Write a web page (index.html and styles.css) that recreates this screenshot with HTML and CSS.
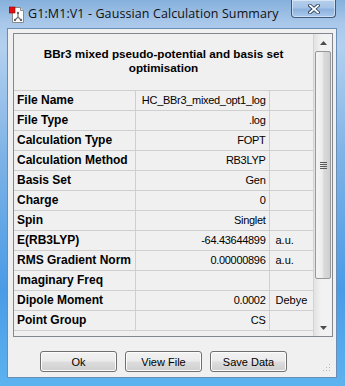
FILE: index.html
```html
<!DOCTYPE html>
<html lang="en">
<head>
    <meta charset="UTF-8">
    <meta name="viewport" content="width=device-width, initial-scale=1.0">
    <title>Gaussian Calculation Summary</title>
    <link rel="stylesheet" href="styles.css">
</head>
<body>
    <div class="window">
        <div class="titlebar">
            <svg class="appicon" width="16" height="18" viewBox="0 0 16 18">
                <path d="M3.5 1.5h8l3 3v12h-11z" fill="#fff" stroke="#8a8a8a"/>
                <path d="M11.5 1.5v3h3" fill="#e8e8e8" stroke="#8a8a8a"/>
                <rect x="0" y="1" width="6" height="6" fill="#e01010" stroke="#900" stroke-width="0.6"/>
                <path d="M9 7v4M9 11l-3 3M9 11l3 3" stroke="#777" stroke-width="1.2" fill="none"/>
                <circle cx="9" cy="7" r="1.2" fill="#666"/>
                <circle cx="6" cy="14" r="1.2" fill="#666"/>
                <circle cx="12" cy="14" r="1.2" fill="#666"/>
            </svg>
            <span class="title">G1:M1:V1 - Gaussian Calculation Summary</span>
            <div class="close">
                <svg width="12" height="10" viewBox="0 0 12 10">
                    <path d="M2 1.5l8 7M10 1.5l-8 7" stroke="#2b3f5c" stroke-width="3.6" stroke-linecap="square"/>
                    <path d="M2 1.5l8 7M10 1.5l-8 7" stroke="#fff" stroke-width="1.8" stroke-linecap="square"/>
                </svg>
            </div>
        </div>
        <div class="client">
            <div class="panel">
                <div class="grid">
                    <table class="summary">
                        <colgroup>
                            <col class="c-label">
                            <col class="c-val">
                            <col class="c-unit">
                        </colgroup>
                        <tr class="head">
                            <td colspan="3">BBr3 mixed pseudo-potential and basis set<br>optimisation</td>
                        </tr>
                        <tr><th>File Name</th><td class="val">HC_BBr3_mixed_opt1_log</td><td class="unit"></td></tr>
                        <tr><th>File Type</th><td class="val">.log</td><td class="unit"></td></tr>
                        <tr><th>Calculation Type</th><td class="val">FOPT</td><td class="unit"></td></tr>
                        <tr><th>Calculation Method</th><td class="val">RB3LYP</td><td class="unit"></td></tr>
                        <tr><th>Basis Set</th><td class="val">Gen</td><td class="unit"></td></tr>
                        <tr><th>Charge</th><td class="val">0</td><td class="unit"></td></tr>
                        <tr><th>Spin</th><td class="val">Singlet</td><td class="unit"></td></tr>
                        <tr><th>E(RB3LYP)</th><td class="val">-64.43644899</td><td class="unit">a.u.</td></tr>
                        <tr><th>RMS Gradient Norm</th><td class="val">0.00000896</td><td class="unit">a.u.</td></tr>
                        <tr><th>Imaginary Freq</th><td class="val"></td><td class="unit"></td></tr>
                        <tr><th>Dipole Moment</th><td class="val">0.0002</td><td class="unit">Debye</td></tr>
                        <tr><th>Point Group</th><td class="val">CS</td><td class="unit"></td></tr>
                    </table>
                </div>
                <div class="scrollbar">
                    <div class="arrow"><svg width="7" height="4" viewBox="0 0 7 4"><path d="M0 4L3.5 0L7 4z" fill="#4d4d4d"/></svg></div>
                    <div class="track">
                        <div class="thumb">
                            <span class="grip-line"></span>
                            <span class="grip-line"></span>
                            <span class="grip-line"></span>
                            <span class="grip-line"></span>
                        </div>
                    </div>
                    <div class="arrow"><svg width="7" height="4" viewBox="0 0 7 4"><path d="M0 0L3.5 4L7 0z" fill="#4d4d4d"/></svg></div>
                </div>
            </div>
            <div class="buttons">
                <button>Ok</button>
                <button>View File</button>
                <button>Save Data</button>
            </div>
            <svg class="sizegrip" width="8" height="8" viewBox="0 0 8 8">
                <rect x="6" y="0" width="1" height="1" fill="#b8b8b8"/>
                <rect x="3" y="3" width="1" height="1" fill="#b8b8b8"/>
                <rect x="6" y="3" width="1" height="1" fill="#b8b8b8"/>
                <rect x="0" y="6" width="1" height="1" fill="#b8b8b8"/>
                <rect x="3" y="6" width="1" height="1" fill="#b8b8b8"/>
                <rect x="6" y="6" width="1" height="1" fill="#b8b8b8"/>
            </svg>
        </div>
    </div>
</body>
</html>
```

FILE: styles.css
```css
*{margin: 0px;padding: 0px;box-sizing: border-box;}
body{
    width: 345px;
    height: 386px;
    overflow: hidden;
    font-family: "Liberation Sans", Arial, sans-serif;
}
.window{
    width: 345px;
    height: 386px;
    padding: 0px 8px 8px 7px;
    display: flex;
    flex-direction: column;
    background: linear-gradient(180deg, #86b0dc 0%, #a9c8ea 6%, #b3d0ef 12%, #7fb3e6 40%, #4a9be6 75%, #5cb3ef 100%);
}
.titlebar{
    height: 28px;
    display: flex;
    align-items: flex-start;
    flex-shrink: 0;
}
.appicon{
    margin: 6px 0px 0px 2px;
}
.title{
    margin: 5px 0px 0px 3px;
    font-family: "Open Sans", "Noto Sans", sans-serif;
    font-size: 12.5px;
    letter-spacing: 0.1px;
    color: #111;
    flex: 1;
    white-space: nowrap;
}
.close{
    width: 45px;
    height: 18px;
    margin-right: 1px;
    border: 1px solid #3e5a7e;
    border-top: none;
    border-radius: 0px 0px 4px 4px;
    background: linear-gradient(180deg, #b5cfec 0%, #a6c3e6 45%, #8db2de 55%, #a9c9ec 100%);
    box-shadow: inset 0px 0px 0px 1px rgba(255,255,255,0.45);
    display: flex;
    align-items: center;
    justify-content: center;
}
.client{
    flex: 1;
    position: relative;
    background: #f0f0f0;
    border: 1px solid #6a8db6;
    padding: 4px 3px 0px 5px;
}
.panel{
    height: 304px;
    border: 1px solid #828790;
    display: flex;
    background: #f0f0f0;
}
.grid{
    width: 299px;
    overflow: hidden;
}
.summary{
    width: 299px;
    border-collapse: collapse;
    table-layout: fixed;
}
.c-label{width: 121px;}
.c-val{width: 134px;}
.c-unit{width: 44px;}
.summary th, .summary td{
    height: 20px;
    border: 1px solid #cfcfcf;
    font-size: 11px;
    white-space: nowrap;
    overflow: hidden;
}
.summary tr:first-child td{
    border-top: none;
}
.summary th{
    border-left: none;
    text-align: left;
    font-size: 12px;
    font-weight: bold;
    padding: 0px 0px 0px 3px;
    color: #000;
}
.summary .val{
    text-align: right;
    padding-right: 3px;
    letter-spacing: -0.3px;
}
.summary .unit{
    border-right: none;
    padding-left: 6px;
}
.summary .head td{
    height: 56px;
    text-align: center;
    font-size: 11.7px;
    font-weight: bold;
    line-height: 14px;
    border-left: none;
    border-right: none;
    padding-bottom: 1px;
}
.scrollbar{
    width: 19px;
    display: flex;
    flex-direction: column;
    border-left: 1px solid #d4d4d4;
    background: linear-gradient(90deg, #e2e2e2, #f2f2f2 40%, #f2f2f2);
}
.arrow{
    height: 17px;
    display: flex;
    align-items: center;
    justify-content: center;
}
.track{
    flex: 1;
    padding: 0px 1px;
}
.thumb{
    height: 228px;
    border: 1px solid #979797;
    border-radius: 2px;
    background: linear-gradient(90deg, #f4f4f4 0%, #ececec 45%, #dadada 55%, #cfcfcf 100%);
    display: flex;
    flex-direction: column;
    align-items: center;
    justify-content: center;
    gap: 1px;
}
.grip-line{
    width: 7px;
    height: 1px;
    background: #5a5a5a;
}
.buttons{
    display: flex;
    gap: 8px;
    padding: 14px 0px 0px 27px;
}
button{
    width: 77px;
    height: 21px;
    border: 1px solid #707070;
    border-radius: 3px;
    background: linear-gradient(180deg, #f2f2f2 0%, #ebebeb 48%, #dddddd 52%, #cfcfcf 100%);
    box-shadow: inset 0px 0px 0px 1px #fcfcfc;
    font-family: "Liberation Sans", Arial, sans-serif;
    font-size: 11px;
    color: #000;
}
.sizegrip{
    position: absolute;
    right: 5px;
    bottom: 5px;
}
```
